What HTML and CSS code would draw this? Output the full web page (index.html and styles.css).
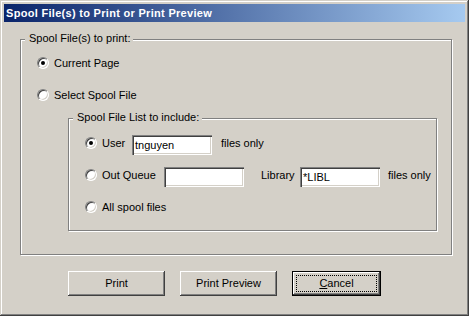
FILE: index.html
```html
<!DOCTYPE html>
<html>
<head>
<meta charset="utf-8">
<title>Spool File(s) to Print or Print Preview</title>
<link rel="stylesheet" href="styles.css">
</head>
<body>
<div class="window">
  <div class="titlebar">Spool File(s) to Print or Print Preview</div>
  <div class="client">
    <div class="group group-main">
      <span class="legend">Spool File(s) to print:</span>
      <div class="opt"><span class="radio checked"></span><span class="lbl">Current Page</span></div>
      <div class="opt opt-next"><span class="radio"></span><span class="lbl">Select Spool File</span></div>
      <div class="group group-sub">
        <span class="legend">Spool File List to include:</span>
        <div class="row">
          <span class="radio checked"></span><span class="lbl lbl-user">User</span>
          <span class="field">tnguyen</span><span class="lbl after-user">files only</span>
        </div>
        <div class="row">
          <span class="radio"></span><span class="lbl lbl-queue">Out Queue</span>
          <span class="field"></span><span class="lbl lbl-library">Library</span>
          <span class="field">*LIBL</span><span class="lbl after-lib">files only</span>
        </div>
        <div class="row">
          <span class="radio"></span><span class="lbl">All spool files</span>
        </div>
      </div>
    </div>
    <div class="buttons">
      <button class="btn">Print</button>
      <button class="btn">Print Preview</button>
      <button class="btn btn-default"><span><u>C</u>ancel</span></button>
    </div>
  </div>
</div>
</body>
</html>
```
FILE: styles.css
```css
html, body {
  margin: 0;
  padding: 0;
  background: #d4d0c8;
}
body {
  font-family: "Liberation Sans", Arial, sans-serif;
  font-size: 11px;
  color: #000;
}
.window {
  box-sizing: border-box;
  width: 469px;
  height: 316px;
  padding: 4px;
  background: #d4d0c8;
  box-shadow: inset -1px -1px 0 #404040, inset 1px 1px 0 #d4d0c8,
              inset -2px -2px 0 #808080, inset 2px 2px 0 #fff;
}
.titlebar {
  height: 18px;
  line-height: 18px;
  padding-left: 2px;
  color: #fff;
  font-weight: bold;
  font-size: 11px;
  letter-spacing: 0.3px;
  background: linear-gradient(to right, #0a246a, #a6caf0);
  white-space: nowrap;
}
.client {
  padding: 17px 0 0 16px;
}
.group {
  position: relative;
  box-sizing: border-box;
  border: 1px solid #808080;
  box-shadow: inset 1px 1px 0 #fff, 1px 1px 0 #fff;
}
.legend {
  position: absolute;
  top: -8px;
  left: 4px;
  padding: 0 3px 0 4px;
  line-height: 13px;
  background: #d4d0c8;
  white-space: nowrap;
}
.group-main {
  width: 432px;
  height: 216px;
  padding: 17px 0 0 16px;
}
.opt {
  display: flex;
  align-items: flex-start;
  height: 12px;
  line-height: 12px;
}
.opt-next {
  margin-top: 20px;
}
.radio {
  position: relative;
  flex: none;
  box-sizing: border-box;
  width: 12px;
  height: 12px;
  border-radius: 50%;
  background: #fff;
  border: 1px solid;
  border-color: #808080 #fff #fff #808080;
  box-shadow: inset 1px 1px 0 #404040, inset -1px -1px 0 #d4d0c8;
}
.radio.checked::after {
  content: "";
  position: absolute;
  left: 3px;
  top: 3px;
  width: 4px;
  height: 4px;
  border-radius: 50%;
  background: #000;
}
.lbl {
  margin-left: 5px;
  line-height: 12px;
  white-space: nowrap;
}
.group-sub {
  margin: 17px 0 0 31px;
  width: 369px;
  height: 113px;
  padding: 16px 0 0 16px;
}
.row {
  display: flex;
  align-items: flex-start;
  height: 20px;
}
.row + .row {
  margin-top: 12px;
}
.row .radio,
.row .lbl {
  margin-top: 2px;
}
.lbl-user {
  width: 30px;
}
.lbl-queue {
  width: 62px;
}
.lbl-library {
  margin-left: 17px;
  width: 39px;
}
.after-user {
  margin-left: 9px;
}
.after-lib {
  margin-left: 8px;
}
.field {
  box-sizing: border-box;
  flex: none;
  width: 80px;
  height: 20px;
  padding: 2px 2px 2px 3px;
  line-height: 16px;
  background: #fff;
  box-shadow: inset 1px 1px 0 #808080, inset 2px 2px 0 #404040,
              inset -1px -1px 0 #fff, inset -2px -2px 0 #d4d0c8;
  white-space: nowrap;
  overflow: hidden;
}
.buttons {
  display: flex;
  gap: 15px;
  margin-top: 16px;
  padding-left: 48px;
}
.btn {
  position: relative;
  box-sizing: border-box;
  width: 97px;
  height: 25px;
  margin: 0;
  padding: 0;
  border: none;
  background: #d4d0c8;
  font-family: inherit;
  font-size: 11px;
  line-height: 13px;
  color: #000;
  box-shadow: inset -1px -1px 0 #404040, inset 1px 1px 0 #fff,
              inset -2px -2px 0 #808080, inset 2px 2px 0 #d4d0c8;
}
.btn-default {
  width: 89px;
  border: 1px solid #000;
}
.btn-default::after {
  content: "";
  position: absolute;
  left: 3px;
  top: 3px;
  right: 3px;
  bottom: 3px;
  border: 1px dotted #000;
}
```
